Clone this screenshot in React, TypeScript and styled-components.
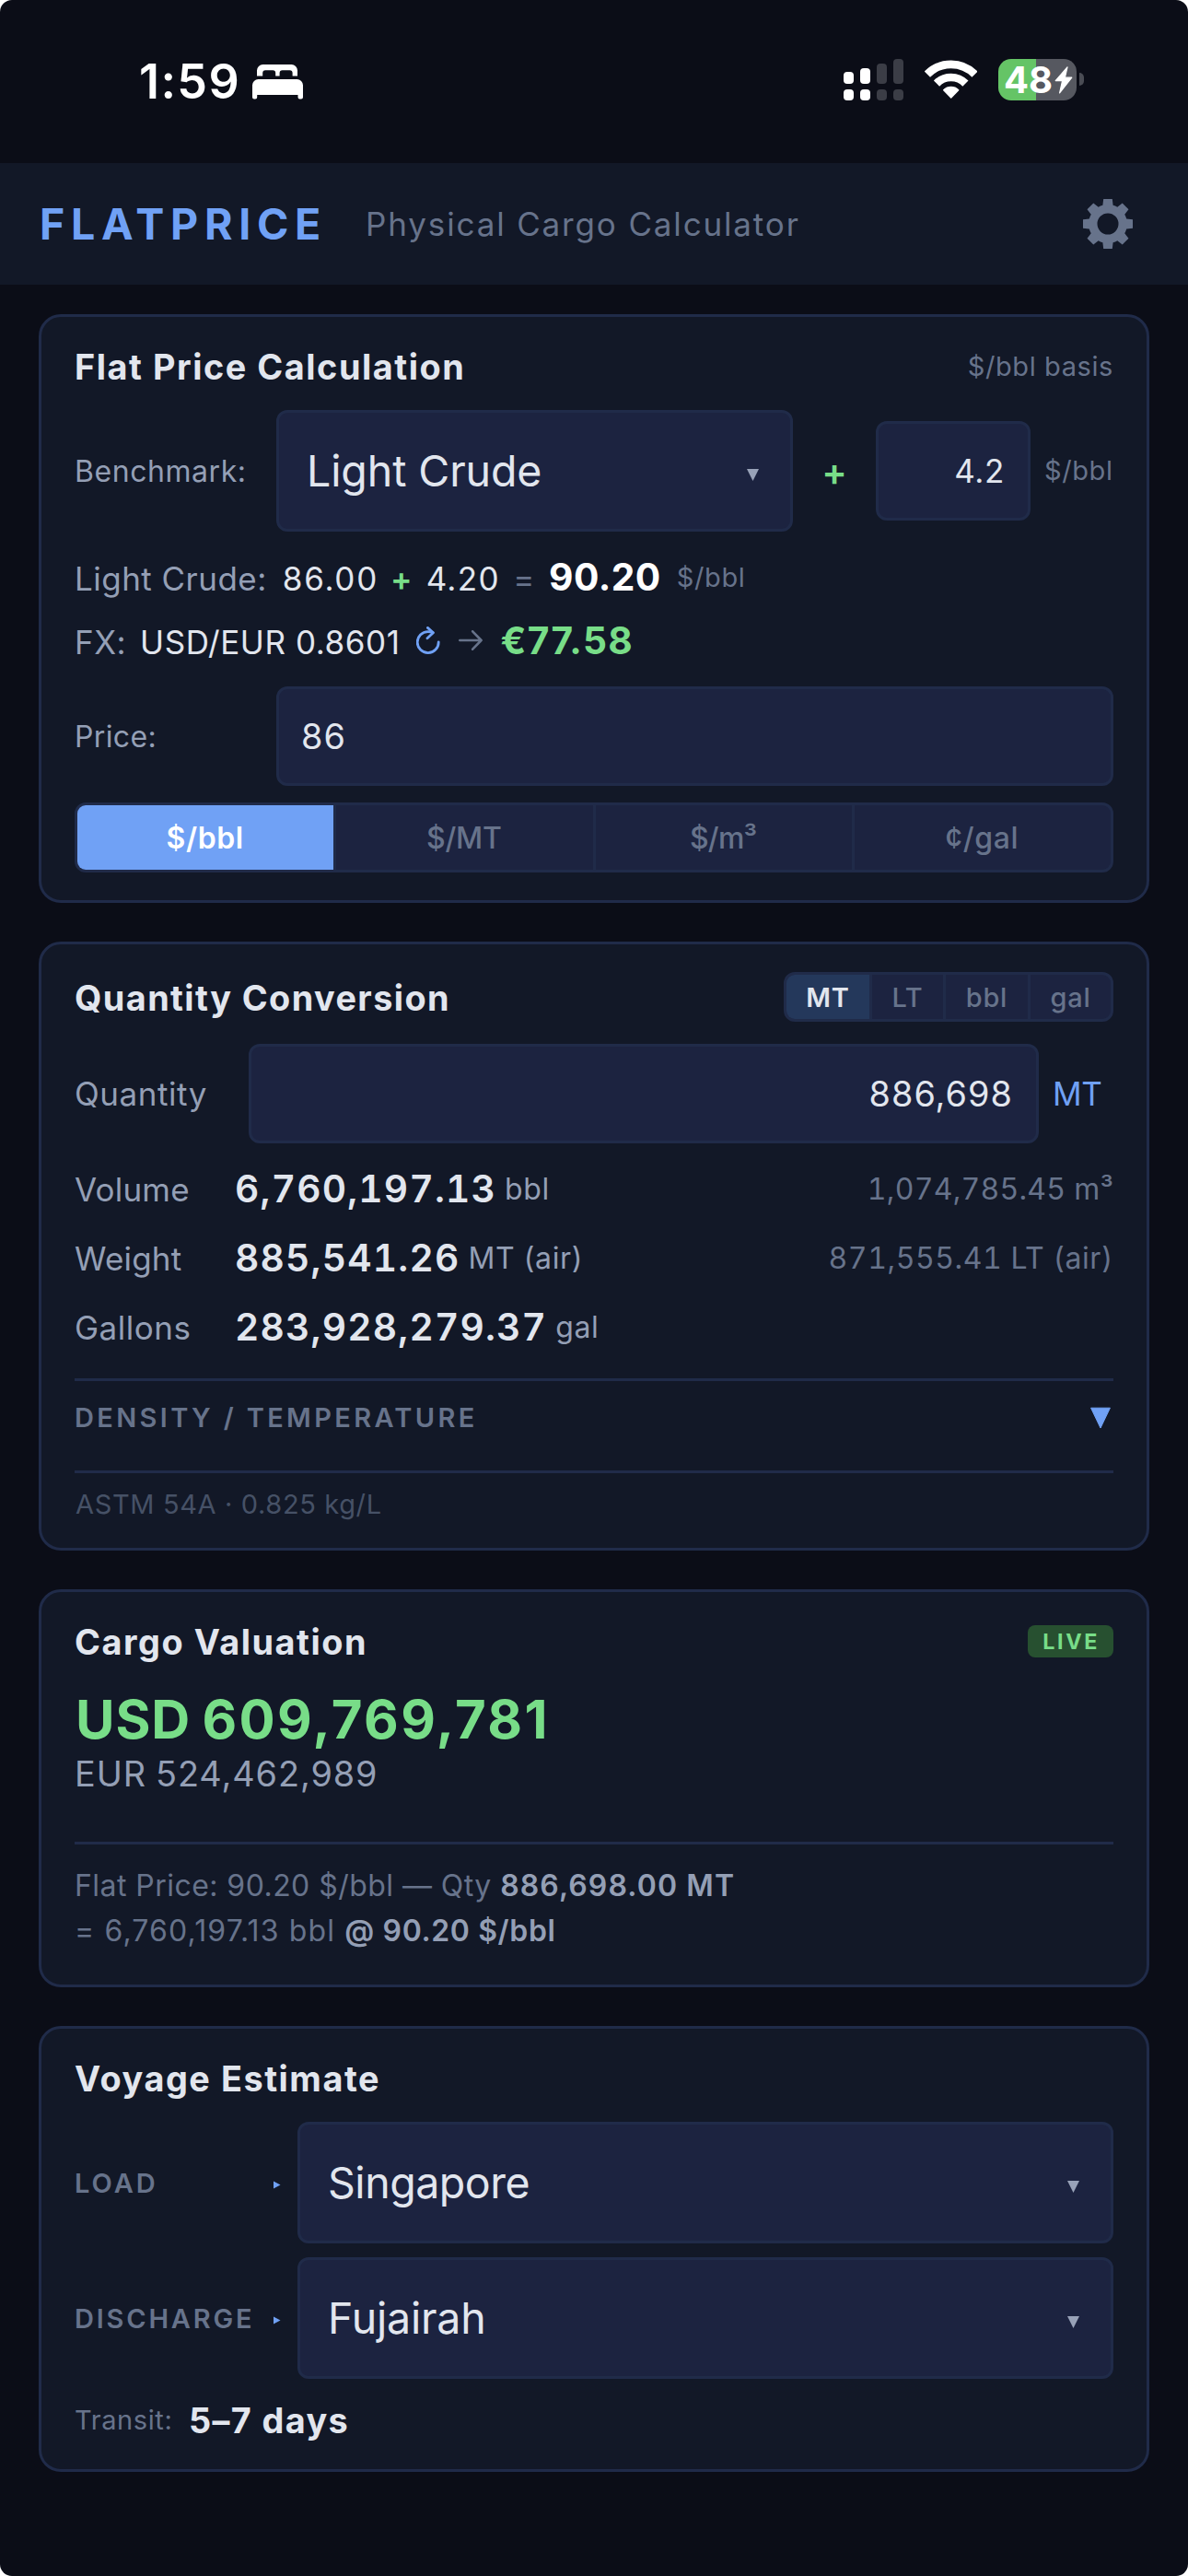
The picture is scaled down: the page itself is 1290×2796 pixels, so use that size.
import React from "react";
import styled, { createGlobalStyle, css } from "styled-components";

const color = {
  page: "#0b0d17",
  surface: "#121827",
  control: "#1c2340",
  line: "#202b49",
  text: "#e2e6ee",
  label: "#949fb5",
  muted: "#67738b",
  faint: "#465166",
  accent: "#70a1f5",
  green: "#78dd88",
};

const GlobalStyle = createGlobalStyle`
  * { box-sizing: border-box; }
  html, body { margin: 0; padding: 0; background: #ffffff; }
  body {
    font-family: Inter, "Liberation Sans", sans-serif;
    -webkit-font-smoothing: antialiased;
  }
`;

/* ---------- shell ---------- */

const Screen = styled.main`
  width: 1290px;
  height: 2796px;
  overflow: hidden;
  border-radius: 13px;
  background: ${color.page};
  color: ${color.text};
`;

const StatusBar = styled.div`
  display: flex;
  align-items: center;
  height: 177px;
  padding: 0 121px 0 151px;
  color: #ffffff;
`;

const Clock = styled.span`
  width: 123px;
  font-size: 52px;
  font-weight: 600;
  letter-spacing: 1.4px;
  line-height: 1;
`;

const StatusIcons = styled.div`
  display: flex;
  align-items: center;
  gap: 23px;
  height: 45px;
  margin: -4px 0 0 auto;
`;

const Battery = styled.div`
  position: relative;
  display: flex;
  align-items: center;
  width: 85px;
  height: 45px;
  padding-left: 6px;
  border-radius: 14px;
  background: linear-gradient(to right, #65c466 41px, #565860 41px);
  &::after {
    content: "";
    position: absolute;
    left: 88px;
    top: 15px;
    width: 5px;
    height: 14px;
    border-radius: 0 5px 5px 0;
    background: #4a4c54;
  }
`;

const BatteryLevel = styled.span`
  width: 55px;
  font-size: 40px;
  font-weight: 700;
  line-height: 45px;
`;

const AppHeader = styled.header`
  display: flex;
  align-items: center;
  height: 132px;
  padding: 0 60px 0 43px;
  background: ${color.surface};
`;

const Brand = styled.h1`
  margin: 0 42px 0 0;
  font-size: 46.5px;
  font-weight: 700;
  letter-spacing: 6.72px;
  line-height: 1;
  color: ${color.accent};
`;

const Tagline = styled.span`
  font-size: 35px;
  letter-spacing: 1.85px;
  line-height: 1;
  color: ${color.muted};
`;

const GearButton = styled.button`
  display: flex;
  margin-left: auto;
  padding: 0;
  border: 0;
  background: none;
  color: ${color.muted};
`;

const Cards = styled.div`
  display: flex;
  flex-direction: column;
  gap: 42px;
  padding: 32px 42px 0;
`;

const Card = styled.section`
  display: flex;
  flex-direction: column;
  padding: 30px 36px;
  border: 3px solid ${color.line};
  border-radius: 24px;
  background: ${color.surface};
`;

const CardHeader = styled.div`
  display: flex;
  align-items: center;
  justify-content: space-between;
  min-height: 47px;
  margin-bottom: 24px;
`;

const CardTitle = styled.h2<{ $track?: number }>`
  margin: 0;
  padding-top: 1px;
  font-size: 37.8px;
  font-weight: 650;
  letter-spacing: ${(p) => p.$track ?? 1.55}px;
  line-height: 46px;
`;

const Rule = styled.hr<{ $top?: number }>`
  width: 100%;
  height: 3px;
  margin: ${(p) => p.$top ?? 0}px 0 0;
  border: 0;
  background: ${color.line};
`;

/* ---------- form parts ---------- */

const Row = styled.div<{ $top?: number }>`
  display: flex;
  align-items: center;
  margin-top: ${(p) => p.$top ?? 0}px;
`;

const FieldLabel = styled.label<{ $width: number; $size?: number; $track?: number }>`
  flex: none;
  width: ${(p) => p.$width}px;
  padding-top: ${(p) => (p.$size ? 0 : 2)}px;
  font-size: ${(p) => p.$size ?? 32}px;
  letter-spacing: ${(p) => p.$track ?? 0.55}px;
  line-height: 40px;
  color: ${color.label};
`;

const controlBox = css`
  display: flex;
  align-items: center;
  border: 3px solid ${color.line};
  border-radius: 12px;
  background: ${color.control};
  white-space: nowrap;
`;

const SelectBox = styled.div<{ $width?: number }>`
  ${controlBox}
  flex: ${(p) => (p.$width ? `0 0 ${p.$width}px` : "1")};
  justify-content: space-between;
  height: 132px;
  padding: 0 34px 0 30px;
  font-size: 46.5px;
  line-height: 56px;
`;

const SelectValue = styled.span<{ $track?: number }>`
  letter-spacing: ${(p) => p.$track ?? -0.1}px;
`;

const InputBox = styled.div<{ $width?: number; $end?: boolean; $size?: number; $track?: number }>`
  ${controlBox}
  flex: ${(p) => (p.$width ? `0 0 ${p.$width}px` : "1")};
  justify-content: ${(p) => (p.$end ? "flex-end" : "flex-start")};
  height: 108px;
  padding: 0 25px 0 24px;
  font-size: ${(p) => p.$size ?? 37.8}px;
  letter-spacing: ${(p) => p.$track ?? 1.05}px;
`;

const PlusSign = styled.span`
  flex: none;
  width: 90px;
  padding-top: 1px;
  text-align: center;
  font-size: 41px;
  font-weight: 600;
  line-height: 50px;
  color: ${color.green};
`;

const UnitNote = styled.span<{ $left?: number }>`
  margin-left: ${(p) => p.$left ?? 0}px;
  font-size: 29px;
  letter-spacing: 0.6px;
  line-height: 36px;
  color: ${color.muted};
`;

const UnitLink = styled.span`
  width: 66px;
  margin-left: 15px;
  font-size: 35px;
  letter-spacing: -0.3px;
  line-height: 42px;
  color: ${color.accent};
`;

/* ---------- formula lines ---------- */

const Formula = styled.div<{ $top: number }>`
  display: flex;
  align-items: baseline;
  height: 60px;
  margin-top: ${(p) => p.$top}px;
  font-size: 35px;
  line-height: 60px;
  white-space: nowrap;
  ${UnitNote} {
    align-self: center;
  }
`;

const FormulaName = styled.span`
  letter-spacing: 0.47px;
  color: ${color.label};
`;

const Figure = styled.span<{ $left: number; $track?: number }>`
  margin-left: ${(p) => p.$left}px;
  letter-spacing: ${(p) => p.$track ?? 1.5}px;
`;

const Operator = styled.span<{ $left: number; $plus?: boolean }>`
  margin-left: ${(p) => p.$left}px;
  font-weight: ${(p) => (p.$plus ? 600 : 400)};
  color: ${(p) => (p.$plus ? color.green : color.muted)};
`;

const Result = styled.strong<{ $left: number; $euro?: boolean }>`
  margin-left: ${(p) => p.$left}px;
  font-size: 40.7px;
  font-weight: ${(p) => (p.$euro ? 650 : 700)};
  letter-spacing: ${(p) => (p.$euro ? 1.3 : 0.5)}px;
  color: ${(p) => (p.$euro ? color.green : "#ffffff")};
`;

const FormulaIcon = styled.span<{ $left: number }>`
  display: flex;
  align-self: center;
  margin: -2px 0 0 ${(p) => p.$left}px;
`;

/* ---------- segmented controls ---------- */

const Segments = styled.div<{ $top?: number }>`
  display: flex;
  margin-top: ${(p) => p.$top ?? 0}px;
  border: 3px solid ${color.line};
  border-radius: 12px;
  overflow: hidden;
  background: ${color.control};
`;

const WideSegment = styled.button<{ $on?: boolean; $track?: number }>`
  flex: 1;
  height: 70px;
  padding: 0 1px 0 0;
  border: 0;
  border-right: 3px solid ${color.line};
  background: ${(p) => (p.$on ? color.accent : "transparent")};
  background-clip: padding-box;
  font: inherit;
  font-size: 32px;
  font-weight: ${(p) => (p.$on ? 600 : 500)};
  letter-spacing: ${(p) => p.$track ?? 0}px;
  color: ${(p) => (p.$on ? "#ffffff" : color.muted)};
  &:last-child {
    border-right: 0;
  }
`;

const SmallSegment = styled.button<{ $on?: boolean; $width: number }>`
  width: ${(p) => p.$width}px;
  height: 48px;
  padding: 0;
  border: 0;
  border-right: 3px solid ${color.line};
  background: ${(p) => (p.$on ? "#24385b" : "transparent")};
  font: inherit;
  font-size: 29px;
  font-weight: ${(p) => (p.$on ? 600 : 500)};
  letter-spacing: 0.7px;
  color: ${(p) => (p.$on ? color.text : color.muted)};
  &:last-child {
    border-right: 0;
  }
`;

/* ---------- quantity results ---------- */

const Results = styled.div`
  margin: 12px 0 18px;
`;

const ResultRow = styled.div`
  display: flex;
  align-items: center;
  height: 75px;
  white-space: nowrap;
`;

const ResultName = styled.span<{ $track?: number }>`
  width: 174px;
  font-size: 35px;
  letter-spacing: ${(p) => p.$track ?? 0.2}px;
  color: ${color.label};
`;

const ResultValue = styled.strong<{ $track?: number }>`
  font-size: 40.7px;
  font-weight: 600;
  font-variant-numeric: tabular-nums;
  letter-spacing: ${(p) => p.$track ?? 1.2}px;
`;

const ResultUnit = styled.span`
  margin-left: 9px;
  font-size: 32px;
  letter-spacing: 0.6px;
  color: ${color.label};
`;

const ResultAlt = styled.span<{ $track: number }>`
  margin-left: auto;
  font-size: 32px;
  font-variant-numeric: tabular-nums;
  letter-spacing: ${(p) => p.$track}px;
  color: ${color.muted};
`;

const Disclosure = styled.button`
  display: flex;
  align-items: center;
  justify-content: space-between;
  height: 79px;
  padding: 0 3px 0 0;
  border: 0;
  background: none;
  color: ${color.accent};
`;

const CapsLabel = styled.span<{ $track: number; $width?: number }>`
  flex: none;
  width: ${(p) => (p.$width ? `${p.$width}px` : "auto")};
  padding-top: ${(p) => (p.$width ? 2 : 0)}px;
  font-family: Inter, "Liberation Sans", sans-serif;
  font-size: 29px;
  font-weight: 600;
  letter-spacing: ${(p) => p.$track}px;
  line-height: 36px;
  text-align: left;
  color: ${color.muted};
`;

const Footnote = styled.p`
  margin: 16px 0 -1px;
  padding-left: 1px;
  font-size: 29px;
  letter-spacing: 0.64px;
  line-height: 36px;
  color: ${color.faint};
`;

/* ---------- valuation ---------- */

const LiveBadge = styled.span`
  height: 35px;
  padding: 0 15px 0 16px;
  border-radius: 8px;
  background: #275030;
  font-size: 23.3px;
  font-weight: 700;
  letter-spacing: 2.6px;
  line-height: 35px;
  color: ${color.green};
`;

const TotalUsd = styled.div`
  margin-top: 1px;
  padding-left: 1px;
  font-size: 58.1px;
  font-weight: 700;
  letter-spacing: 2.4px;
  line-height: 72px;
  color: ${color.green};
`;

const Currency = styled.span`
  margin-right: -4px;
  letter-spacing: 0.9px;
`;

const TotalEur = styled.div`
  font-size: 37.8px;
  letter-spacing: 0.92px;
  word-spacing: -1.4px;
  line-height: 46px;
  color: ${color.label};
`;

const Breakdown = styled.p`
  margin: 20px 0 4px;
  font-size: 32px;
  line-height: 49px;
  color: ${color.muted};
`;

const BreakdownLine = styled.span<{ $track: number }>`
  display: block;
  letter-spacing: ${(p) => p.$track}px;
`;

const Emphasis = styled.strong<{ $track: number }>`
  font-weight: 600;
  letter-spacing: ${(p) => p.$track}px;
  color: ${color.label};
`;

/* ---------- voyage ---------- */

const PortMark = styled.span`
  display: flex;
  flex: none;
  width: 26px;
  margin-top: 4px;
  color: ${color.accent};
`;

const TransitValue = styled.strong`
  margin-left: 17.5px;
  font-size: 37.8px;
  font-weight: 650;
  letter-spacing: 1.4px;
  line-height: 46px;
`;

const TransitRow = styled(Row)`
  height: 46px;
`;

/* ---------- icons ---------- */

const BedIcon = () => (
  <svg width="55" height="38" viewBox="0 0 55 38" fill="#fff">
    <path d="M5 12.5V6.5A6.5 6.5 0 0 1 11.5 0H42.5A6.5 6.5 0 0 1 49 6.5V12.5H43.6V9.3a3 3 0 0 0-3-3h-8a3 3 0 0 0-3 3v3.2H25.2V9.3a3 3 0 0 0-3-3h-8a3 3 0 0 0-3 3V12.5Z" />
    <path d="M0 22.5A6.5 6.5 0 0 1 6.5 16H48.5A6.5 6.5 0 0 1 55 22.5V35.5a2 2 0 0 1-2 2h-1.5a2 2 0 0 1-2-2V33H5.2v2.5a2 2 0 0 1-2 2H2a2 2 0 0 1-2-2Z" />
  </svg>
);

const signalColumns = [
  { x: 0, top: 14, on: true },
  { x: 18, top: 10, on: true },
  { x: 36, top: 5, on: false },
  { x: 54, top: 0, on: false },
];

const SignalIcon = () => (
  <svg width="65" height="45" viewBox="0 0 65 45">
    {signalColumns.map((c) => (
      <g key={c.x} fill={c.on ? "#fff" : "#3b3d46"}>
        <rect x={c.x} y={c.top} width="11" height={27 - c.top} rx="4" />
        <rect x={c.x} y="33" width="11" height="12" rx="4" />
      </g>
    ))}
  </svg>
);

const WifiIcon = () => (
  <svg width="57" height="43" viewBox="0 0 57 43" fill="none" stroke="#fff" strokeWidth="8.7">
    <path d="M2.9 15.6A36.2 36.2 0 0 1 54.5 15.6" />
    <path d="M13 25.6A22 22 0 0 1 44.4 25.6" />
    <path d="M28.7 41L20.7 32.8A11.4 11.4 0 0 1 36.7 32.8Z" fill="#fff" strokeWidth="1.4" strokeLinejoin="round" />
  </svg>
);

const BoltIcon = () => (
  <svg width="20" height="30" viewBox="0 0 20 30" fill="#fff" stroke="#fff" strokeWidth="1.2" strokeLinejoin="round">
    <path d="M14 .8L1.2 15.6H8.6L5.6 28.8L18.8 12.2H11.4Z" />
  </svg>
);

const gearPath = (() => {
  const parts: string[] = [];
  const at = (x: number, y: number, a: number) =>
    `${(27 + x * Math.cos(a) - y * Math.sin(a)).toFixed(2)} ${(27 + x * Math.sin(a) + y * Math.cos(a)).toFixed(2)}`;
  for (let i = 0; i < 8; i += 1) {
    const a = (i * Math.PI) / 4;
    parts.push(`${i === 0 ? "M" : "A21 21 0 0 1 "}${at(-5.6, -20.2, a)}`);
    parts.push(`L${at(-4.8, -27, a)}`, `L${at(4.8, -27, a)}`, `L${at(5.6, -20.2, a)}`);
  }
  return `${parts.join("")}A21 21 0 0 1 ${at(-5.6, -20.2, 0)}ZM27 15.5a11.5 11.5 0 1 0 0 23a11.5 11.5 0 1 0 0-23Z`;
})();

const GearIcon = () => (
  <svg width="54" height="54" viewBox="0 0 54 54" fill="currentColor" fillRule="evenodd">
    <path d={gearPath} />
  </svg>
);

const CaretDown = () => (
  <svg width="13" height="22" viewBox="0 0 13 22" fill="#98a2b8">
    <path d="M0 9H13L6.5 22Z" />
  </svg>
);

const DisclosureIcon = () => (
  <svg width="22" height="25" viewBox="0 0 22 25" fill="currentColor" stroke="currentColor" strokeLinejoin="round">
    <path d="M.6 2.2H21.4L11 24Z" />
  </svg>
);

const PortIcon = () => (
  <svg width="8" height="9" viewBox="0 0 8 9" fill="currentColor">
    <path d="M0 .5L7.5 4.5L0 8.5Z" />
  </svg>
);

const RefreshIcon = () => (
  <svg width="26" height="30" viewBox="0 0 26 30" fill="none" stroke={color.accent} strokeWidth="2.8" strokeLinecap="round">
    <path d="M24.2 16.8A11.5 11.5 0 1 1 12.7 5.6Q16 5.6 18 6.6" />
    <path d="M12.4 1.4L18.4 6.8L12 12.8" strokeLinejoin="round" />
  </svg>
);

const ArrowIcon = () => (
  <svg width="26" height="22" viewBox="0 0 26 22" fill="none" stroke={color.muted} strokeWidth="2.6" strokeLinecap="round" strokeLinejoin="round">
    <path d="M1.3 11H24.6M15.2 1.3L24.6 11L15.2 20.7" />
  </svg>
);

/* ---------- screen ---------- */

export default function App() {
  return (
    <>
      <GlobalStyle />
      <Screen>
        <StatusBar>
          <Clock>1:59</Clock>
          <BedIcon />
          <StatusIcons>
            <SignalIcon />
            <WifiIcon />
            <Battery>
              <BatteryLevel>48</BatteryLevel>
              <BoltIcon />
            </Battery>
          </StatusIcons>
        </StatusBar>

        <AppHeader>
          <Brand>FLATPRICE</Brand>
          <Tagline>Physical Cargo Calculator</Tagline>
          <GearButton aria-label="Settings">
            <GearIcon />
          </GearButton>
        </AppHeader>

        <Cards>
          <Card>
            <CardHeader>
              <CardTitle>Flat Price Calculation</CardTitle>
              <UnitNote>$/bbl basis</UnitNote>
            </CardHeader>
            <Row>
              <FieldLabel $width={219}>Benchmark:</FieldLabel>
              <SelectBox $width={561}>
                <SelectValue>Light Crude</SelectValue>
                <CaretDown />
              </SelectBox>
              <PlusSign>+</PlusSign>
              <InputBox $width={168} $end $size={35} $track={0.6}>4.2</InputBox>
              <UnitNote $left={15}>$/bbl</UnitNote>
            </Row>
            <Formula $top={19.5}>
              <FormulaName>Light Crude:</FormulaName>
              <Figure $left={17} $track={1.76}>86.00</Figure>
              <Operator $left={13}>
                <Operator as="b" $left={0} $plus>+</Operator>
              </Operator>
              <Figure $left={15} $track={1.31}>4.20</Figure>
              <Operator $left={14.5}>=</Operator>
              <Result $left={15.5}>90.20</Result>
              <UnitNote $left={17}>$/bbl</UnitNote>
            </Formula>
            <Formula $top={9}>
              <FormulaName>FX:</FormulaName>
              <Figure $left={15} $track={0.56}>USD/EUR 0.8601</Figure>
              <FormulaIcon $left={18}>
                <RefreshIcon />
              </FormulaIcon>
              <FormulaIcon $left={20}>
                <ArrowIcon />
              </FormulaIcon>
              <Result $left={19} $euro>€77.58</Result>
            </Formula>
            <Row $top={19.5}>
              <FieldLabel $width={219} $track={0.35}>Price:</FieldLabel>
              <InputBox>86</InputBox>
            </Row>
            <Segments $top={18}>
              <WideSegment $on $track={0.56}>$/bbl</WideSegment>
              <WideSegment $track={-0.27}>$/MT</WideSegment>
              <WideSegment $track={-0.77}>$/m³</WideSegment>
              <WideSegment $track={0.65}>¢/gal</WideSegment>
            </Segments>
          </Card>

          <Card>
            <CardHeader>
              <CardTitle $track={1.43}>Quantity Conversion</CardTitle>
              <Segments>
                <SmallSegment $on $width={93}>MT</SmallSegment>
                <SmallSegment $width={80}>LT</SmallSegment>
                <SmallSegment $width={92}>bbl</SmallSegment>
                <SmallSegment $width={87}>gal</SmallSegment>
              </Segments>
            </CardHeader>
            <Row>
              <FieldLabel $width={189} $size={35}>Quantity</FieldLabel>
              <InputBox $end>886,698</InputBox>
              <UnitLink>MT</UnitLink>
            </Row>
            <Results>
              <ResultRow>
                <ResultName>Volume</ResultName>
                <ResultValue>6,760,197.13</ResultValue>
                <ResultUnit>bbl</ResultUnit>
                <ResultAlt $track={0.25}>1,074,785.45 m³</ResultAlt>
              </ResultRow>
              <ResultRow>
                <ResultName>Weight</ResultName>
                <ResultValue>885,541.26</ResultValue>
                <ResultUnit>MT (air)</ResultUnit>
                <ResultAlt $track={0.56}>871,555.41 LT (air)</ResultAlt>
              </ResultRow>
              <ResultRow>
                <ResultName $track={0.5}>Gallons</ResultName>
                <ResultValue>283,928,279.37</ResultValue>
                <ResultUnit>gal</ResultUnit>
              </ResultRow>
            </Results>
            <Rule />
            <Disclosure>
              <CapsLabel $track={3.35}>DENSITY / TEMPERATURE</CapsLabel>
              <DisclosureIcon />
            </Disclosure>
            <Rule $top={18} />
            <Footnote>ASTM 54A · 0.825 kg/L</Footnote>
          </Card>

          <Card>
            <CardHeader>
              <CardTitle>Cargo Valuation</CardTitle>
              <LiveBadge>LIVE</LiveBadge>
            </CardHeader>
            <TotalUsd>
              <Currency>USD</Currency> 609,769,781
            </TotalUsd>
            <TotalEur>EUR 524,462,989</TotalEur>
            <Rule $top={51} />
            <Breakdown>
              <BreakdownLine $track={0.45}>
                Flat Price: 90.20 $/bbl — Qty <Emphasis $track={1.1}>886,698.00 MT</Emphasis>
              </BreakdownLine>
              <BreakdownLine $track={1.15}>
                = 6,760,197.13 bbl <Emphasis $track={0.6}>@ 90.20 $/bbl</Emphasis>
              </BreakdownLine>
            </Breakdown>
          </Card>

          <Card>
            <CardHeader>
              <CardTitle>Voyage Estimate</CardTitle>
            </CardHeader>
            <Row>
              <CapsLabel $width={216} $track={3}>LOAD</CapsLabel>
              <PortMark>
                <PortIcon />
              </PortMark>
              <SelectBox>
                <SelectValue $track={-0.47}>Singapore</SelectValue>
                <CaretDown />
              </SelectBox>
            </Row>
            <Row $top={15}>
              <CapsLabel $width={216} $track={2.8}>DISCHARGE</CapsLabel>
              <PortMark>
                <PortIcon />
              </PortMark>
              <SelectBox>
                <SelectValue $track={-0.2}>Fujairah</SelectValue>
                <CaretDown />
              </SelectBox>
            </Row>
            <TransitRow $top={22}>
              <UnitNote>Transit:</UnitNote>
              <TransitValue>5–7 days</TransitValue>
            </TransitRow>
          </Card>
        </Cards>
      </Screen>
    </>
  );
}
